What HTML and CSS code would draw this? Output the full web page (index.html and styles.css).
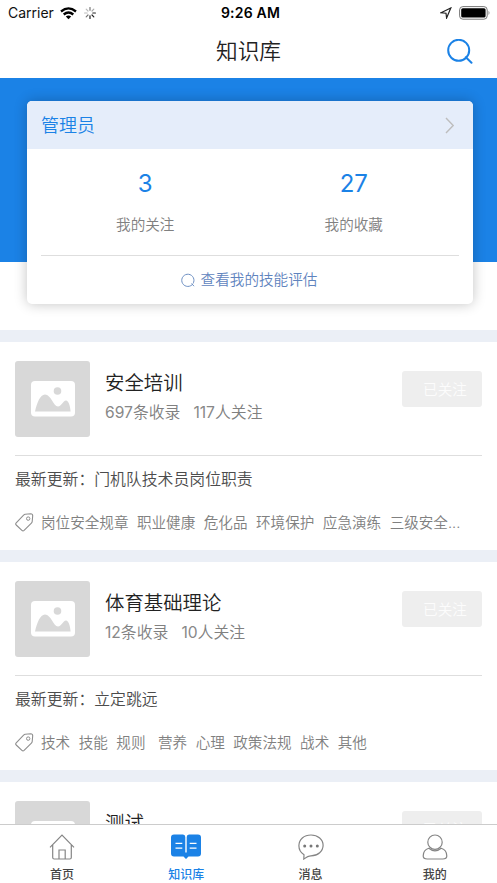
FILE: index.html
```html
<!DOCTYPE html>
<html lang="zh-CN">
<head>
<meta charset="utf-8">
<title>知识库</title>
<link rel="stylesheet" href="styles.css">
</head>
<body>
<svg class="defs" aria-hidden="true">
  <symbol id="picture" viewBox="0 0 44 36">
    <rect width="44" height="35.5" rx="4" fill="#fff"/>
    <circle cx="26.5" cy="10" r="3.8" fill="#d8d8d8"/>
    <path d="M4 30.5C6 22 9 13.5 14 13.5c6 0 8.500 12 13 12 3.500 0 5-6 8-6 2.500 0 4.200 5 4.600 11z" fill="#d8d8d8"/>
  </symbol>
  <symbol id="tag" viewBox="0 0 19 19">
    <path d="M10.200 1.300 15.700.8q2 0 2 2l-.5 5.700q0 .8-.8 1.600l-7.300 7.200q-1.100 1-2.200 0L1.200 12q-1-1.100 0-2.200l7.400-7.600q.7-.8 1.600-.9z" fill="none" stroke="#8e8e8e" stroke-width="1.100"/>
    <circle cx="13.200" cy="5.600" r="1.700" fill="none" stroke="#8e8e8e"/>
  </symbol>
</svg>
<div class="screen">
  <header class="status">
    <div class="status-left">
      <span>Carrier</span>
      <svg class="wifi" width="17" height="13" viewBox="0 0 17 13"><g fill="none" stroke="#000" stroke-width="2.300"><path d="M1 4.500Q8.500-1.800 16 4.500"/><path d="M3.700 7.500Q8.500 3.600 13.300 7.500"/></g><path d="M5.800 9.400Q8.500 7.400 11.200 9.400L8.500 12.200z"/></svg>
      <svg width="12" height="12" viewBox="-6 -6 12 12" stroke-width="1.200" stroke-linecap="round"><path d="M0-2.800V-5.400" stroke="#777"/><path d="M2-2 3.800-3.800" stroke="#aaa"/><path d="M2.800 0H5.400" stroke="#222"/><path d="M2 2 3.800 3.800" stroke="#222"/><path d="M0 2.800V5.400" stroke="#222"/><path d="M-2 2-3.800 3.800" stroke="#777"/><path d="M-2.800 0H-5.400" stroke="#bbb"/><path d="M-2-2-3.800-3.800" stroke="#bbb"/></svg>
    </div>
    <div class="clock">9:26 AM</div>
    <div class="status-right">
      <svg width="12" height="12" viewBox="0 0 12 12"><path d="M1 5.800 10.800 1 6.600 11 6 6.200z" fill="none" stroke="#222" stroke-width="1.200"/></svg>
      <svg width="32" height="14" viewBox="0 0 32 14"><rect x=".6" y=".6" width="27.600" height="12.600" rx="3.300" fill="none" stroke="#777"/><rect x="2.200" y="2.200" width="24.400" height="9.400" rx="1.600"/><path d="M29.500 4.800q2 2.100 0 4.200z" fill="#888"/></svg>
    </div>
  </header>
  <nav class="navbar">
    <h1>知识库</h1>
    <svg class="search" width="26" height="25" viewBox="0 0 26 25"><circle cx="11.700" cy="11.300" r="10.500"/><path d="M18.800 18.200 24.500 23.800"/></svg>
  </nav>
  <main>
    <section class="hero">
      <div class="profile">
        <div class="profile-head"><span>管理员</span><svg width="10" height="17" viewBox="0 0 10 17"><path d="M1 1 8.200 8.500 1 16" fill="none" stroke="#bdbdbd" stroke-width="1.400"/></svg></div>
        <div class="counts">
          <div><b>3</b><span>我的关注</span></div>
          <div><b>27</b><span>我的收藏</span></div>
        </div>
        <div class="assess"><svg width="14" height="14" viewBox="0 0 14 14"><path d="M11 11.800A6.100 6.100 0 1 1 12 10.600M10.600 10.500 13 13.200" fill="none" stroke="#6d8fc2"/></svg><span>查看我的技能评估</span></div>
      </div>
    </section>
    <article class="topic">
      <div class="summary">
        <div class="thumb"><svg width="44" height="36"><use href="#picture"/></svg></div>
        <div class="info"><h2>安全培训</h2><p><span><i>697</i>条收录</span><span><i>117</i>人关注</span></p></div>
        <div class="followed">已关注</div>
      </div>
      <div class="latest">最新更新：门机队技术员岗位职责</div>
      <div class="tags"><svg width="19" height="19"><use href="#tag"/></svg><span>岗位安全规章</span><span>职业健康</span><span>危化品</span><span>环境保护</span><span>应急演练</span><span>三级安全<i>...</i></span></div>
    </article>
    <article class="topic">
      <div class="summary">
        <div class="thumb"><svg width="44" height="36"><use href="#picture"/></svg></div>
        <div class="info"><h2>体育基础理论</h2><p><span><i>12</i>条收录</span><span><i>10</i>人关注</span></p></div>
        <div class="followed">已关注</div>
      </div>
      <div class="latest">最新更新：立定跳远</div>
      <div class="tags"><svg width="19" height="19"><use href="#tag"/></svg><span>技术</span><span>技能</span><span class="wide">规则</span><span>营养</span><span>心理</span><span>政策法规</span><span>战术</span><span>其他</span></div>
    </article>
    <article class="topic">
      <div class="summary">
        <div class="thumb"><svg width="44" height="36"><use href="#picture"/></svg></div>
        <div class="info"><h2>测试</h2></div>
        <div class="followed">已关注</div>
      </div>
    </article>
  </main>
  <footer class="tabs">
    <div class="tab"><svg width="26" height="26" viewBox="0 0 26 26"><path d="M1 13.300 13 1 25 13.300M3.700 10.800V23.500q0 1.500 1.500 1.500H20.800q1.500 0 1.500-1.500V10.800M10 25V16h6.200V25"/></svg><span>首页</span></div>
    <div class="tab active"><svg width="30" height="26" viewBox="0 0 30 26"><path class="book" d="M3 0.500H12Q14.300.5 14.300 3V18.500h1.400V3q0-2.500 2.300-2.500H27q3 0 3 3V19.500q0 3-3 3H17.500L15 25 12.500 22.500H3q-3 0-3-3V3.500Q0 .5 3 .5z"/><path class="lines" d="M4.500 9.300h6.800M4.500 14.200h6.800M18.700 9.300h6.800M18.700 14.200h6.800"/></svg><span>知识库</span></div>
    <div class="tab"><svg width="26" height="26" viewBox="0 0 26 26"><path d="M6 20.800C4 19.500.9 16.500.9 11.800.9 5.500 6 1 13 1s12.100 4.500 12.100 10.300S20 21.800 13 21.800c-2 0-4 .8-7.200 3.300z"/><g class="dots"><circle cx="6.700" cy="12" r="1.500"/><circle cx="13" cy="12" r="1.500"/><circle cx="19.300" cy="12" r="1.500"/></g></svg><span>消息</span></div>
    <div class="tab"><svg width="26" height="26" viewBox="0 0 26 26"><circle cx="13" cy="8.200" r="7.200"/><path d="M6.800 14.300C3 15.500 1.200 18.500 1.200 22q0 3 4 3h15.600q4 0 4-3c0-3.500-1.800-6.500-5.600-7.700Q13 19.500 6.800 14.300z"/></svg><span>我的</span></div>
  </footer>
</div>
</body>
</html>
```
FILE: styles.css
```css
* { box-sizing: border-box; margin: 0; padding: 0; }
body { background: #fff; font-family: "Noto Sans CJK SC", sans-serif; font-weight: 350; color: #222; }
svg { display: block; flex: none; }
i { font-style: normal; }
.defs { width: 0; height: 0; position: absolute; }
.screen { height: 883px; display: flex; flex-direction: column; overflow: hidden; }

.status { flex: none; height: 26px; display: grid; grid-template-columns: 1fr auto 1fr; align-items: center; padding: 0 6px 0 8px; font: 14px/26px Inter, sans-serif; color: #111; }
.status-left, .status-right { display: flex; align-items: center; }
.status-left { gap: 6.500px; }
.status-right { justify-content: flex-end; gap: 7px; }
.clock { font-weight: 600; font-size: 14px; letter-spacing: .2px; padding-left: 2px; color: #000; }

.navbar { flex: none; height: 52px; display: grid; grid-template-columns: 1fr auto 1fr; align-items: center; padding: 0 24px 2px 0; }
.navbar h1 { grid-column: 2; font-size: 21.7px; font-weight: 350; line-height: 48px; padding-left: 24px; margin-top: -3px; }
.search { justify-self: end; fill: none; stroke: #1b82e6; stroke-width: 2; stroke-linecap: round; }

main { flex: 1; min-height: 0; overflow: hidden; background: #ebeff6; }
.hero { height: 252px; padding: 23px 24px 0 27px; background: linear-gradient(#1b82e6 184px, #fff 184px); }
.profile { height: 203px; border-radius: 5px; background: #fff; box-shadow: 0 0 13px rgba(0, 0, 0, .24); overflow: hidden; }
.profile-head { height: 48px; padding: 0 18px 0 14px; display: flex; align-items: center; justify-content: space-between; background: #e5edfa; color: #1b82e6; font-size: 18px; line-height: 47px; }
.profile-head span { height: 48px; }
.counts { height: 107px; margin: 0 14px; padding-right: 1px; display: flex; border-bottom: 1px solid #dedede; }
.counts div { flex: 1; display: flex; flex-direction: column; align-items: center; padding-top: 17px; }
.counts b { font: 400 24px/36px Inter, sans-serif; color: #1b82e6; }
.counts span { margin-top: 11px; font-size: 14.600px; line-height: 22px; color: #808080; }
.assess { display: flex; align-items: center; justify-content: center; gap: 6px; height: 48px; padding: 0 2px 1px 0; color: #5f84be; font-size: 14.600px; }
.assess span { margin-top: -2px; }

.topic { height: 208px; margin-top: 12px; padding: 19px 15px 0; background: #fff; }
.summary { height: 95px; display: flex; border-bottom: 1px solid #dedede; }
.thumb { flex: none; width: 75px; height: 76px; border-radius: 3px; background: #d8d8d8; display: flex; align-items: center; justify-content: center; }
.info { flex: 1; padding: 7px 0 0 15px; }
.info h2 { font-size: 19.400px; line-height: 28px; font-weight: 350; }
.info p { display: flex; gap: 13px; margin-top: 4px; font-size: 15.850px; line-height: 24px; color: #808080; }
.info i { font-family: Inter, sans-serif; font-weight: 400; font-size: 15.600px; color: #888; }
.followed { flex: none; width: 80px; height: 36px; margin-top: 10px; padding-left: 6px; border-radius: 3px; background: #eee; color: #fcfcfc; font-size: 14.600px; line-height: 35px; text-align: center; }
.latest { height: 46px; font-size: 15.850px; line-height: 45px; color: #4c4c4c; white-space: nowrap; }
.tags { height: 41px; display: flex; align-items: center; gap: 8.500px; font-size: 14.580px; color: #808080; white-space: nowrap; }
.tags span { margin-top: -2px; }
.tags svg { margin-right: -1.500px; }
.tags i { font-family: Inter, sans-serif; }
.tags .wide { margin-right: 4px; }

.tabs { flex: none; height: 59px; display: flex; border-top: 1px solid #ccc; background: #fff; }
.tab { flex: 1; display: flex; flex-direction: column; align-items: center; padding-top: 9px; font-size: 12px; line-height: 18px; color: #444; font-weight: 500; }
.tab span { margin-top: 5px; }
.tab svg { fill: none; stroke: #858585; stroke-width: 1.200; }
.tab.active { color: #1b82e6; }
.tab .book { fill: #1b82e6; stroke: none; }
.tab .lines { stroke: #fff; stroke-width: 1.300; }
.tab .dots { fill: #777; stroke: none; }
```
